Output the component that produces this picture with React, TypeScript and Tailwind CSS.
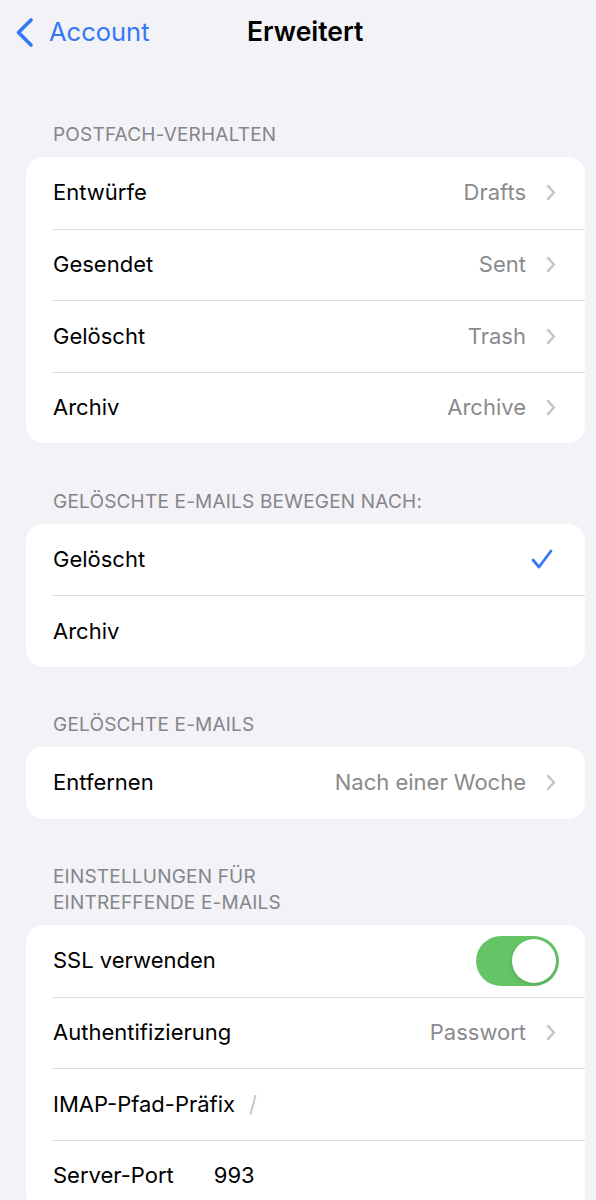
import { ReactNode } from "react";

const font = { fontFamily: "Inter, 'Noto Sans', sans-serif" };

function Chevron() {
  return (
    <svg width="10" height="17" viewBox="0 0 10 17" className="shrink-0">
      <path d="M2 2l6 6.5L2 15" fill="none" stroke="#c4c4c7" strokeWidth="2.4" strokeLinecap="round" strokeLinejoin="round" />
    </svg>
  );
}

function Row({ label, value, chevron, first, right }: { label: string; value?: string; chevron?: boolean; first?: boolean; right?: ReactNode }) {
  return (
    <div className="pl-[27px] h-[71.5px] flex">
      <div className={`flex-1 flex items-center pr-[29px] ${first ? "" : "border-t border-[#dcdce0]"}`}>
        <span className="text-[22px] text-black">{label}</span>
        <div className="flex-1" />
        {value && <span className="text-[22px] text-[#8a8a8e]">{value}</span>}
        {chevron && <span className="ml-[20px]"><Chevron /></span>}
        {right}
      </div>
    </div>
  );
}

function Header({ children, first }: { children: ReactNode; first?: boolean }) {
  return (
    <div className={`${first ? "mt-[58px]" : "mt-[45.5px]"} mb-[9px] px-[53px] text-[19px] leading-[26px] uppercase text-[#85858a] tracking-[0.2px]`}>
      {children}
    </div>
  );
}

function Card({ children }: { children: ReactNode }) {
  return <div className="ml-[26px] mr-[11px] bg-white rounded-[17px] overflow-hidden">{children}</div>;
}

export default function App() {
  return (
    <div className="w-[596px] h-[1200px] bg-[#f2f2f7] overflow-hidden" style={font}>
      <div className="h-[64px] relative flex items-center">
        <div className="flex items-center pl-[15px] gap-[15px] text-[#3478f6]">
          <svg width="19" height="31" viewBox="0 0 19 31">
            <path d="M16 3L3.5 15.5 16 28" fill="none" stroke="#3478f6" strokeWidth="3.6" strokeLinecap="round" strokeLinejoin="round" />
          </svg>
          <span className="text-[25.5px]">Account</span>
        </div>
        <div className="absolute left-[247px] top-0 h-[64px] flex items-center text-[26.5px] font-semibold text-black">Erweitert</div>
      </div>

      <Header first>Postfach-Verhalten</Header>
      <Card>
        <Row first label="Entwürfe" value="Drafts" chevron />
        <Row label="Gesendet" value="Sent" chevron />
        <Row label="Gelöscht" value="Trash" chevron />
        <Row label="Archiv" value="Archive" chevron />
      </Card>

      <Header>Gelöschte E-Mails bewegen nach:</Header>
      <Card>
        <Row
          first
          label="Gelöscht"
          right={
            <svg width="22" height="20" viewBox="0 0 22 20" className="mr-[3px]">
              <path d="M2 11l6 7L20 2" fill="none" stroke="#3478f6" strokeWidth="2.8" strokeLinecap="round" strokeLinejoin="round" />
            </svg>
          }
        />
        <Row label="Archiv" />
      </Card>

      <Header>Gelöschte E-Mails</Header>
      <Card>
        <Row first label="Entfernen" value="Nach einer Woche" chevron />
      </Card>

      <Header>
        Einstellungen für
        <br />
        eintreffende E-Mails
      </Header>
      <Card>
        <Row
          first
          label="SSL verwenden"
          right={
            <div className="w-[83px] h-[50px] rounded-full bg-[#65c466] flex items-center justify-end pr-[3px] -mr-[3px]">
              <div className="w-[44px] h-[44px] rounded-full bg-white shadow-[0_2px_4px_rgba(0,0,0,0.15)]" />
            </div>
          }
        />
        <Row label="Authentifizierung" value="Passwort" chevron />
        <div className="pl-[27px] h-[71.5px] flex">
          <div className="flex-1 flex items-center border-t border-[#dcdce0] text-[22px]">
            <span className="text-black">IMAP-Pfad-Präfix</span>
            <span className="ml-[14px] text-[#c4c4c7]">/</span>
          </div>
        </div>
        <div className="pl-[27px] h-[71.5px] flex">
          <div className="flex-1 flex items-center border-t border-[#dcdce0] text-[22px]">
            <span className="text-black">Server-Port</span>
            <span className="ml-[40px] text-black">993</span>
          </div>
        </div>
      </Card>
    </div>
  );
}
